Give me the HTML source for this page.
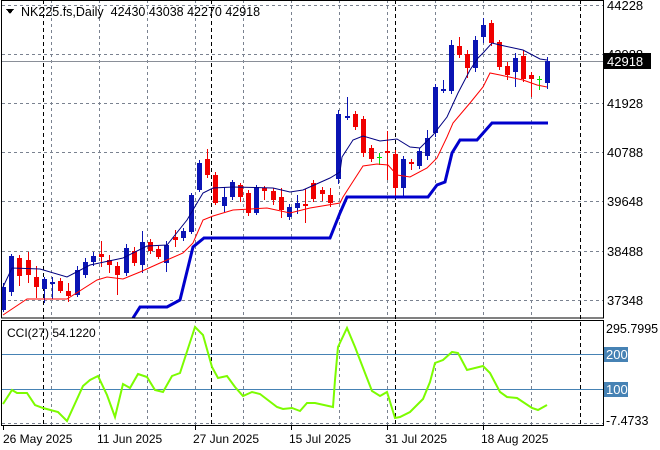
<!DOCTYPE html>
<html><head><meta charset="utf-8"><style>
html,body{margin:0;padding:0;background:#fff;width:660px;height:450px;overflow:hidden}
svg{display:block}
text{font-family:"Liberation Sans",sans-serif;white-space:pre}
</style></head><body>
<svg id="s" width="660" height="450" xmlns="http://www.w3.org/2000/svg" shape-rendering="crispEdges">
<g stroke="#7a8290" stroke-dasharray="3,3" stroke-width="1">
<line x1="51.5" y1="0" x2="51.5" y2="318"/><line x1="99.5" y1="0" x2="99.5" y2="318"/><line x1="147.5" y1="0" x2="147.5" y2="318"/><line x1="195.5" y1="0" x2="195.5" y2="318"/><line x1="243.5" y1="0" x2="243.5" y2="318"/><line x1="291.5" y1="0" x2="291.5" y2="318"/><line x1="339.5" y1="0" x2="339.5" y2="318"/><line x1="387.5" y1="0" x2="387.5" y2="318"/><line x1="435.5" y1="0" x2="435.5" y2="318"/><line x1="483.5" y1="0" x2="483.5" y2="318"/><line x1="531.5" y1="0" x2="531.5" y2="318"/>
<line x1="51.5" y1="320" x2="51.5" y2="425"/><line x1="99.5" y1="320" x2="99.5" y2="425"/><line x1="147.5" y1="320" x2="147.5" y2="425"/><line x1="195.5" y1="320" x2="195.5" y2="425"/><line x1="243.5" y1="320" x2="243.5" y2="425"/><line x1="291.5" y1="320" x2="291.5" y2="425"/><line x1="339.5" y1="320" x2="339.5" y2="425"/><line x1="387.5" y1="320" x2="387.5" y2="425"/><line x1="435.5" y1="320" x2="435.5" y2="425"/><line x1="483.5" y1="320" x2="483.5" y2="425"/><line x1="531.5" y1="320" x2="531.5" y2="425"/>
<line x1="2" y1="5.5" x2="603" y2="5.5"/><line x1="2" y1="54.5" x2="603" y2="54.5"/><line x1="2" y1="103.5" x2="603" y2="103.5"/><line x1="2" y1="152.5" x2="603" y2="152.5"/><line x1="2" y1="201.5" x2="603" y2="201.5"/><line x1="2" y1="251.5" x2="603" y2="251.5"/><line x1="2" y1="300.5" x2="603" y2="300.5"/>
<line x1="2" y1="423.5" x2="603" y2="423.5"/>
</g>
<g stroke="#000" stroke-dasharray="4,3" stroke-width="1">
<line x1="43.5" y1="0" x2="43.5" y2="425"/><line x1="211.5" y1="0" x2="211.5" y2="425"/><line x1="395.5" y1="0" x2="395.5" y2="425"/><line x1="580.5" y1="0" x2="580.5" y2="425"/>
</g>
<line x1="2" y1="61.5" x2="603" y2="61.5" stroke="#8a8f98"/>
<line x1="2" y1="354.5" x2="603" y2="354.5" stroke="#4682b4"/>
<line x1="2" y1="389.5" x2="603" y2="389.5" stroke="#4682b4"/>
<g id="c"></g>
<g fill="none" shape-rendering="auto">
<polyline stroke="#0000cc" stroke-width="3" points="133,318 140,307 167,307 180,300 193,247 204,238 330,238 340,213 347,197 428,197 437,185 445,182 452,153 460,140 477,140 492,123 548,123"/>
<polyline stroke="#000080" stroke-width="1" points="3,287 12,268 40,269 67,277 90,265 123,258 147,246 167,245 187,220 203,193 213,188 233,187 273,188 290,192 303,190 330,178 340,172 342,157 353,140 363,136 380,141 397,139 410,147 420,148 433,135 447,117 458,93 470,70 478,58 483,53 492,43 500,45 523,50 540,59 547,60"/>
<polyline stroke="#ff0000" stroke-width="1" points="3,315 27,299 67,299 97,280 107,277 123,279 140,272 160,263 183,253 193,243 203,220 213,216 233,210 267,208 290,213 310,208 340,203 343,197 363,166 377,164 388,165 397,175 410,177 427,168 437,158 447,137 453,123 470,103 483,87 490,73 500,75 523,80 537,85 547,87"/>
<polyline stroke="#7cfc00" stroke-width="2" points="3,404 12,390 17,393 27,393 35,405 43,408 58,412 67,421 83,386 90,380 98,376 107,395 115,417 123,384 130,388 138,374 147,377 155,390 163,392 172,376 180,373 195,327 203,335 212,367 218,378 227,376 235,387 243,396 252,392 260,394 277,407 283,409 292,408 300,411 307,403 315,403 333,407 335,380 338,347 347,328 355,347 365,373 372,391 380,396 387,392 395,418 400,417 410,412 423,399 430,382 435,363 443,360 452,352 458,353 467,370 483,366 490,373 500,392 507,397 517,398 532,408 538,410 547,405"/>
</g>
<rect x="1.5" y="0.5" width="602" height="317.5" fill="none" stroke="#000"/>
<rect x="1.5" y="320.5" width="602" height="105" fill="none" stroke="#000"/>
<g stroke="#000"><line x1="99.5" y1="426" x2="99.5" y2="430"/><line x1="195.5" y1="426" x2="195.5" y2="430"/><line x1="291.5" y1="426" x2="291.5" y2="430"/><line x1="387.5" y1="426" x2="387.5" y2="430"/><line x1="483.5" y1="426" x2="483.5" y2="430"/><line x1="3.5" y1="426" x2="3.5" y2="430"/></g>
<g font-size="13" fill="#000">
<text x="607" y="10">44228</text><text x="607" y="59">42988</text><text x="607" y="108">41928</text><text x="607" y="157">40788</text><text x="607" y="206">39648</text><text x="607" y="256">38488</text><text x="607" y="305">37348</text>
<text x="606" y="333" font-size="12.5">295.7995</text>
<text x="606" y="425" font-size="12.5">-7.4733</text>
</g>
<g font-size="12" fill="#000">
<text x="3" y="443">26 May 2025</text><text x="97" y="443">11 Jun 2025</text><text x="193" y="443">27 Jun 2025</text><text x="289" y="443">15 Jul 2025</text><text x="385" y="443">31 Jul 2025</text><text x="481" y="443">18 Aug 2025</text>
</g>
<rect x="604" y="53" width="47" height="16" fill="#000"/>
<text x="607" y="66" font-size="13" fill="#fff">42918</text>
<rect x="604" y="347" width="24" height="15" fill="#4682b4"/>
<text x="606" y="359" font-size="13" fill="#fff">200</text>
<rect x="604" y="382" width="24" height="15" fill="#4682b4"/>
<text x="606" y="394" font-size="13" fill="#fff">100</text>
<polygon points="6,9 14,9 10,14" fill="#000"/>
<text x="21" y="16" font-size="12.5" fill="#000">NK225.fs,Daily  42430 43038 42270 42918</text>
<text x="7" y="337" font-size="12" fill="#000">CCI(27) 54.1220</text>
</svg>
<script>
var B=[
[0,287,310,283,312],[0,256,292,254,296],[1,258,276,255,286],[1,260,275,252,283],[1,277,287,266,298],
[0,279,289,277,303],[0,282,283,277,299],[1,281,291,278,293],[1,291,296,283,302],[0,270,295,266,297],
[0,262,275,258,278],[0,256,262,252,266],[1,254,257,241,267],[1,260,265,255,273],[1,266,275,262,295],
[0,248,273,244,276],[1,251,263,247,266],[0,242,265,231,273],[1,242,251,239,254],[1,249,257,246,259],
[0,245,263,241,272],[1,237,240,230,247],[0,231,238,228,241],[0,195,232,193,234],[0,163,190,160,192],
[1,159,175,149,178],[1,175,203,172,205],[0,197,206,187,212],[0,182,197,180,200],[1,185,197,183,202],
[1,193,213,190,216],[0,187,213,185,215],[1,188,191,186,200],[1,191,200,188,205],[1,197,210,188,218],
[0,207,217,204,220],[0,203,208,195,214],[1,204,206,189,223],[1,183,199,180,202],[1,190,194,187,201],
[1,195,203,188,207],[0,114,179,110,184],[0,116,117,97,120],[1,114,127,111,130],[1,119,153,116,157],
[1,148,159,145,162],[2,157,157,153,165],[1,151,153,131,180],[1,154,188,150,196],[0,159,188,156,196],
[1,162,164,159,170],[0,151,166,148,169],[0,138,156,130,160],[0,87,133,84,137],[0,89,91,80,93],
[0,45,91,40,94],[1,46,55,37,58],[1,54,68,50,78],[0,40,68,36,72],[0,25,37,18,43],
[1,23,43,20,46],[1,42,67,40,70],[1,66,75,62,80],[0,58,72,53,87],[1,56,79,50,82],
[1,75,79,72,97],[2,79,79,76,90],[0,61,83,57,89]];
var h='';
for(var i=0;i<B.length;i++){
 var x=i<=41?Math.round(3+i*8.17):339+(i-41)*8;
 var b=B[i],col=b[0]==0?'#0a14b4':b[0]==1?'#f00000':'#00e000';
 h+='<line x1="'+(x+0.5)+'" y1="'+b[3]+'" x2="'+(x+0.5)+'" y2="'+b[4]+'" stroke="'+col+'"/>';
 if(b[0]==2){h+='<line x1="'+(x-2)+'" y1="'+(b[1]+0.5)+'" x2="'+(x+3)+'" y2="'+(b[1]+0.5)+'" stroke="'+col+'"/>';}
 else h+='<rect x="'+(x-2)+'" y="'+b[1]+'" width="5" height="'+Math.max(2,b[2]-b[1])+'" fill="'+col+'"/>';
}
document.getElementById('c').innerHTML=h;
</script>
</body></html>
